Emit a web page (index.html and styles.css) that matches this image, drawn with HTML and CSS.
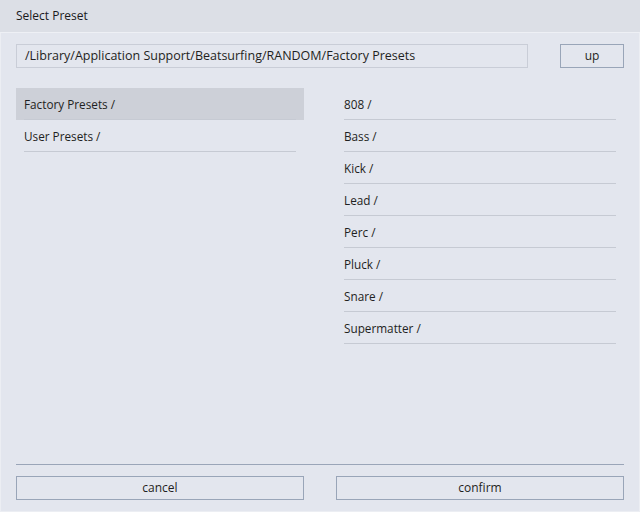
FILE: index.html
```html
<!DOCTYPE html>
<html>
<head>
<meta charset="utf-8">
<link rel="stylesheet" href="styles.css">
</head>
<body>
<div class="window">
  <div class="titlebar">Select Preset</div>
  <div class="content">
    <div class="pathrow">
      <div class="pathbox">/Library/Application Support/Beatsurfing/RANDOM/Factory Presets</div>
      <button class="btn up">up</button>
    </div>
    <div class="columns">
      <ul class="list">
        <li class="row selected"><span>Factory Presets /</span></li>
        <li class="row"><span>User Presets /</span></li>
      </ul>
      <ul class="list">
        <li class="row"><span>808 /</span></li>
        <li class="row"><span>Bass /</span></li>
        <li class="row"><span>Kick /</span></li>
        <li class="row"><span>Lead /</span></li>
        <li class="row"><span>Perc /</span></li>
        <li class="row"><span>Pluck /</span></li>
        <li class="row"><span>Snare /</span></li>
        <li class="row"><span>Supermatter /</span></li>
      </ul>
    </div>
  </div>
  <div class="footer">
    <button class="btn wide">cancel</button>
    <button class="btn wide">confirm</button>
  </div>
</div>
</body>
</html>
```

FILE: styles.css
```css
html, body {
  margin: 0;
  padding: 0;
}
body {
  font-family: "Open Sans", "Noto Sans", sans-serif;
  font-size: 11.75px;
  color: #1f1f22;
  background: #e3e6ee;
}
.window {
  width: 640px;
  height: 512px;
  display: flex;
  flex-direction: column;
  background: #e3e6ee;
  box-shadow: inset 0 0 0 1px #eceef3;
  box-sizing: border-box;
}
.titlebar {
  height: 32px;
  line-height: 31px;
  padding-left: 16px;
  background: #dcdfe6;
  border-bottom: 1px solid #eef0f5;
  font-size: 12px;
  color: #1a1a1c;
}
.content {
  flex: 1;
  padding: 11px 16px 0 16px;
}
.pathrow {
  display: flex;
  justify-content: space-between;
  height: 24px;
}
.pathbox {
  width: 512px;
  height: 24px;
  box-sizing: border-box;
  border: 1px solid #c9cdd7;
  padding-left: 8px;
  line-height: 22px;
  font-size: 12.5px;
  color: #1f1f22;
  white-space: nowrap;
}
.btn {
  font-family: inherit;
  font-size: 12px;
  color: #1f1f22;
  background: #e3e6ee;
  border: 1px solid #99a5b8;
  height: 24px;
  box-sizing: border-box;
  padding: 0 0 1px 0;
  margin: 0;
}
.up {
  width: 64px;
}
.columns {
  display: flex;
  gap: 32px;
  margin-top: 20px;
}
.list {
  list-style: none;
  margin: 0;
  padding: 0;
  width: 288px;
}
.row {
  height: 32px;
  padding: 0 8px;
  box-sizing: border-box;
}
.row span {
  display: block;
  height: 32px;
  line-height: 32px;
  box-sizing: border-box;
  border-bottom: 1px solid #c6cad3;
}
.row.selected {
  background: #cdd0d8;
}
.footer {
  margin: 0 16px;
  border-top: 1px solid #9aa5b8;
  padding: 11px 0 12px 0;
  display: flex;
  gap: 32px;
}
.wide {
  width: 288px;
}
```
